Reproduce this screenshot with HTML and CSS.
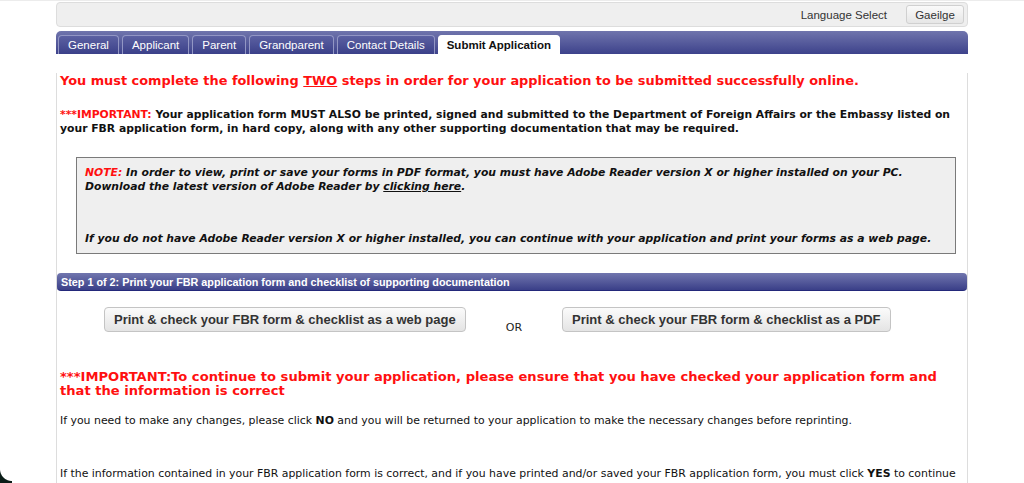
FILE: index.html
```html
<!DOCTYPE html>
<html lang="en">
<head>
<meta charset="utf-8">
<title>Submit Application</title>
<link rel="stylesheet" href="styles.css">
</head>
<body>
<div class="page">
  <div class="langbar">
    <span class="lang-label">Language Select</span>
    <button class="lang-btn">Gaeilge</button>
  </div>
  <div class="tabbar">
    <span class="tab">General</span>
    <span class="tab">Applicant</span>
    <span class="tab">Parent</span>
    <span class="tab">Grandparent</span>
    <span class="tab">Contact Details</span>
    <span class="tab active">Submit Application</span>
  </div>
  <div class="content">
    <h1 class="red-head">You must complete the following <u>TWO</u> steps in order for your application to be submitted successfully online.</h1>
    <p class="important"><span class="red">***IMPORTANT:</span> Your application form MUST ALSO be printed, signed and submitted to the Department of Foreign Affairs or the Embassy listed on your FBR application form, in hard copy, along with any other supporting documentation that may be required.</p>
    <div class="note">
      <p><span class="red">NOTE:</span> In order to view, print or save your forms in PDF format, you must have Adobe Reader version X or higher installed on your PC. Download the latest version of Adobe Reader by <u>clicking here</u>.</p>
      <p class="note-second">If you do not have Adobe Reader version X or higher installed, you can continue with your application and print your forms as a web page.</p>
    </div>
    <div class="step-head">Step 1 of 2: Print your FBR application form and checklist of supporting documentation</div>
    <div class="print-row">
      <button class="print-btn">Print &amp; check your FBR form &amp; checklist as a web page</button>
      <span class="or">OR</span>
      <button class="print-btn">Print &amp; check your FBR form &amp; checklist as a PDF</button>
    </div>
    <h2 class="red-head second">***IMPORTANT:To continue to submit your application, please ensure that you have checked your application form and that the information is correct</h2>
    <p class="plain">If you need to make any changes, please click <b>NO</b> and you will be returned to your application to make the necessary changes before reprinting.</p>
    <p class="plain last">If the information contained in your FBR application form is correct, and if you have printed and/or saved your FBR application form, you must click <b>YES</b> to continue</p>
  </div>
</div>
<div class="corner"></div>
</body>
</html>
```
FILE: styles.css
```css
html, body {
  margin: 0;
  padding: 0;
  background: #ffffff;
  height: 483px;
  overflow: hidden;
}
body {
  border-top: 1px solid #ececec;
  box-sizing: border-box;
  position: relative;
  font-family: "DejaVu Sans", Verdana, sans-serif;
  color: #111;
}
.page {
  margin-left: 56px;
  width: 912px;
}
.langbar {
  margin-top: 1px;
  height: 25px;
  box-sizing: border-box;
  background: #efefef;
  border: 1px solid #dddddd;
  border-radius: 4px;
  display: flex;
  justify-content: flex-end;
  align-items: center;
  padding-right: 3px;
  gap: 19px;
}
.lang-label {
  font-family: "Liberation Sans", Arial, sans-serif;
  font-size: 11.5px;
  color: #333;
}
.lang-btn {
  font-family: "Liberation Sans", Arial, sans-serif;
  font-size: 11.5px;
  color: #333;
  width: 58px;
  height: 19px;
  padding: 0;
  border: 1px solid #d0d0d0;
  border-radius: 3px;
  background: linear-gradient(#fafafa, #e6e6e6);
}
.tabbar {
  margin-top: 4px;
  height: 23px;
  box-sizing: border-box;
  padding: 4px 0 0 2px;
  display: flex;
  gap: 3px;
  background: linear-gradient(#7075ad, #3d428b);
  border-radius: 5px 5px 0 0;
}
.tab {
  height: 19px;
  box-sizing: border-box;
  padding: 0 9px;
  display: flex;
  align-items: center;
  font-family: "Liberation Sans", Arial, sans-serif;
  font-size: 11.5px;
  color: #fff;
  background: linear-gradient(#5c61a2, #3b4089);
  border: 1px solid #9296c4;
  border-bottom: none;
  border-radius: 4px 4px 0 0;
}
.tab.active {
  background: #fff;
  color: #111;
  font-weight: bold;
  border-color: #fff;
  padding: 0 8px;
}
.content {
  border-left: 1px solid #dddddd;
  border-right: 1px solid #dddddd;
  padding: 0 3px;
  height: 430px;
}
.red { color: #ff1010; }
.red-head {
  margin: 19px 0 0;
  font-size: 12.9px;
  line-height: 16px;
  font-weight: bold;
  color: #ff1010;
}
.important {
  margin: 19px 0 0;
  font-size: 10.8px;
  line-height: 14px;
  font-weight: bold;
}
.note {
  margin: 21px 8px 0 16px;
  height: 97px;
  box-sizing: border-box;
  background: #efefef;
  border: 1px solid #7a7a7a;
  padding: 8px 8px 0 8px;
  font-size: 10.8px;
  line-height: 14px;
  font-weight: bold;
  font-style: italic;
}
.note p { margin: 0; }
.note .note-second { margin-top: 38px; }
.step-head {
  margin-top: 19px;
  margin-left: -3px;
  margin-right: -3px;
  height: 18px;
  box-sizing: border-box;
  padding-left: 4px;
  display: flex;
  align-items: center;
  font-family: "Liberation Sans", Arial, sans-serif;
  font-size: 10.8px;
  font-weight: bold;
  color: #fff;
  background: linear-gradient(#7176ae, #3a3f88);
  border-bottom: 1px solid #23287a;
  border-radius: 4px;
}
.print-row {
  margin-top: 16px;
  padding-left: 44px;
  display: flex;
  align-items: flex-start;
  gap: 40px;
}
.print-btn {
  height: 25px;
  padding: 0 9px;
  font-family: "Liberation Sans", Arial, sans-serif;
  font-size: 13px;
  font-weight: bold;
  color: #333;
  background: linear-gradient(#fbfbfb, #e4e4e4);
  border: 1px solid #c4c4c4;
  border-radius: 4px;
}
.or {
  margin-top: 14px;
  font-size: 11px;
  color: #222;
}
.red-head.second {
  margin-top: 36px;
  font-size: 13.1px;
  line-height: 14px;
}
.plain {
  margin: 16px 0 0;
  font-size: 10.9px;
  line-height: 14px;
}
.plain.last { margin-top: 39px; }
.corner {
  position: absolute;
  left: 0;
  bottom: 0;
  width: 12px;
  height: 14px;
  background: radial-gradient(circle at 100% 0, transparent 11.5px, #0b1d18 12.5px);
}
```
